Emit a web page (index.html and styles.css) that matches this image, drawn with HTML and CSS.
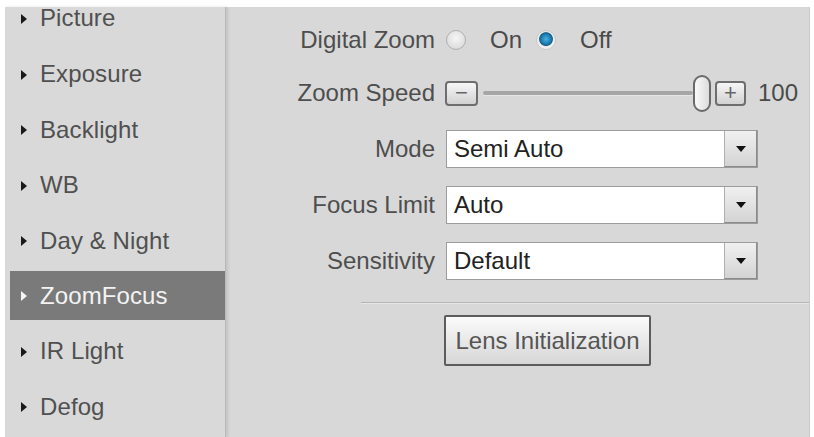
FILE: index.html
```html
<!DOCTYPE html>
<html>
<head>
<meta charset="utf-8">
<link rel="stylesheet" href="styles.css">
</head>
<body>
<div class="frame">
  <nav class="sidebar">
    <ul class="menu">
      <li class="item top"><span class="tri"></span>Picture</li>
      <li class="item"><span class="tri"></span>Exposure</li>
      <li class="item"><span class="tri"></span>Backlight</li>
      <li class="item"><span class="tri"></span>WB</li>
      <li class="item"><span class="tri"></span>Day &amp; Night</li>
      <li class="item active"><span class="tri"></span>ZoomFocus</li>
      <li class="item"><span class="tri"></span>IR Light</li>
      <li class="item"><span class="tri"></span>Defog</li>
    </ul>
  </nav>
  <main class="content">
    <div class="row first">
      <span class="label">Digital Zoom</span>
      <span class="radio"></span><span class="opt">On</span>
      <span class="radio checked"></span><span class="opt">Off</span>
    </div>
    <div class="row">
      <span class="label">Zoom Speed</span>
      <span class="stepbtn">&minus;</span>
      <span class="track"></span>
      <span class="thumb"></span>
      <span class="stepbtn plus">+</span>
      <span class="value">100</span>
    </div>
    <div class="row">
      <span class="label">Mode</span>
      <div class="select"><span class="sel-text">Semi Auto</span><span class="sel-btn"><span class="caret"></span></span></div>
    </div>
    <div class="row">
      <span class="label">Focus Limit</span>
      <div class="select"><span class="sel-text">Auto</span><span class="sel-btn"><span class="caret"></span></span></div>
    </div>
    <div class="row">
      <span class="label">Sensitivity</span>
      <div class="select"><span class="sel-text">Default</span><span class="sel-btn"><span class="caret"></span></span></div>
    </div>
    <div class="sep"></div>
    <button class="btn">Lens Initialization</button>
  </main>
</div>
</body>
</html>
```
FILE: styles.css
```css
* { box-sizing: border-box; }
html, body { margin: 0; padding: 0; background: #ffffff; }
body {
  font-family: "Liberation Sans", Arial, sans-serif;
  font-size: 24px;
  overflow: hidden;
}
.frame {
  display: flex;
  margin: 7px 4px 0 5px;
  height: 430px;
  background: #d8d8d8;
  border-right: 1px solid #cacaca;
}
.sidebar {
  width: 221px;
  flex: none;
  background: #d9d9d9;
  border-right: 1px solid #b9b9b9;
  box-shadow: 2px 0 3px rgba(0,0,0,0.10);
}
.menu {
  list-style: none;
  margin: 0;
  padding: 0;
}
.item {
  display: flex;
  align-items: center;
  height: 49px;
  margin: 0 0 6.4px 5px;
  width: 215px;
  padding-left: 11px;
  color: #505050;
  letter-spacing: 0.1px;
}
.item.top {
  height: 22px;
  margin-bottom: 20.9px;
}
.tri {
  width: 0;
  height: 0;
  border-top: 5.5px solid transparent;
  border-bottom: 5.5px solid transparent;
  border-left: 6px solid #1a1a1a;
  margin-right: 13px;
  margin-top: 1px;
}
.item.active {
  background: #7a7a7a;
  color: #f3f3f3;
}
.item.active .tri { border-left-color: #f5f5f5; }

.content {
  flex: 1;
  padding-top: 14px;
  color: #4e4e4e;
}
.row {
  display: flex;
  align-items: center;
  height: 38px;
  margin-bottom: 18px;
}
.row.first { margin-bottom: 15px; }
.label {
  width: 209px;
  flex: none;
  text-align: right;
  margin-right: 10px;
}
.radio {
  width: 20px;
  height: 20px;
  border-radius: 50%;
  border: 1px solid #b0b0b0;
  background: radial-gradient(circle at 50% 40%, #f6f6f6 0%, #dedede 70%, #cfcfcf 100%);
  flex: none;
  margin-left: 1px;
  margin-right: 24px;
}
.radio.checked {
  margin-left: 14px;
  border-color: #c8c8c8;
  background: radial-gradient(circle at 50% 45%, #4fb0df 0%, #1a79ad 38%, #155f8a 48%, #eaeaea 55%, #f2f2f2 75%, #d6d6d6 100%);
}
.opt { color: #4a4a4a; }

.stepbtn {
  width: 33px;
  height: 25px;
  flex: none;
  border: 2px solid #6e6e6e;
  border-radius: 4px;
  background: linear-gradient(#f6f6f6, #d2d2d2);
  color: #666;
  font-size: 22px;
  line-height: 20px;
  text-align: center;
}
.stepbtn.plus { width: 31px; margin-left: 4px; }
.track {
  width: 210px;
  height: 4px;
  margin-left: 5px;
  background: #a6a6a6;
  border-radius: 2px;
  box-shadow: 0 1px 0 #e6e6e6;
}
.thumb {
  width: 18px;
  height: 37px;
  flex: none;
  border: 2px solid #6a6a6a;
  border-radius: 9px;
  background: linear-gradient(90deg, #fafafa, #dcdcdc);
}
.value { margin-left: 12px; color: #4a4a4a; }

.select {
  display: flex;
  width: 312px;
  height: 38px;
  border: 1px solid #9c9c9c;
  background: #fff;
  margin-left: 1px;
}
.sel-text {
  flex: 1;
  padding-left: 7px;
  line-height: 36px;
  color: #222;
}
.sel-btn {
  width: 33px;
  flex: none;
  display: flex;
  align-items: center;
  justify-content: center;
  border-left: 1px solid #b0b0b0;
  border-right: 1px solid #8a8a8a;
  border-bottom: 1px solid #8a8a8a;
  background: linear-gradient(#f0f0f0, #d4d4d4);
}
.caret {
  width: 0;
  height: 0;
  border-left: 5px solid transparent;
  border-right: 5px solid transparent;
  border-top: 6px solid #111;
}
.sep {
  margin: 22px 0 0 135px;
  height: 1px;
  background: #b5b5b5;
  box-shadow: 0 1px 0 #e6e6e6;
}
.btn {
  display: block;
  margin: 12px 0 0 218px;
  width: 207px;
  height: 51px;
  border: 2px solid #5c5c5c;
  border-radius: 2px;
  background: linear-gradient(#fbfbfb, #d6d6d6);
  font-family: "Liberation Sans", Arial, sans-serif;
  font-size: 24px;
  color: #555;
  padding: 0;
}
```
